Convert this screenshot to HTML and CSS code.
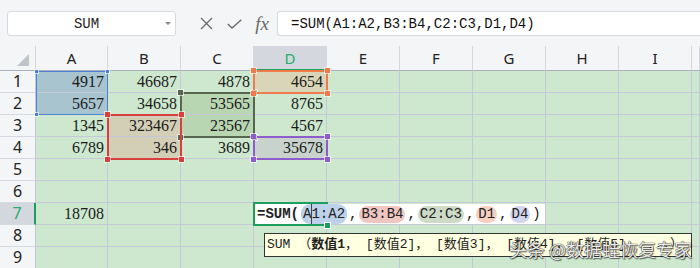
FILE: index.html
```html
<!doctype html>
<html lang="zh-CN">
  <head>
    <meta charset="utf-8">
    <title>SUM</title>
    <link rel="stylesheet" href="styles.css">
  </head>
  <body>
    <div class="bar">
      <div class="namebox"><span class="val">SUM</span><span class="drop"></span></div>
      <div class="tools">
        <span class="tool"><svg width="13" height="13" viewBox="0 0 13 13"><path d="M1 1L12 12M12 1L1 12" stroke="currentColor" stroke-width="1.3" fill="none"/></svg></span>
        <span class="tool"><svg width="15" height="10" viewBox="0 0 15 10"><path d="M0.8 5L5 9L14.3 0.8" stroke="currentColor" stroke-width="1.3" fill="none"/></svg></span>
        <span class="tool fx">fx</span>
      </div>
      <div class="formula">=SUM(A1:A2,B3:B4,C2:C3,D1,D4)</div>
    </div>

    <div class="sheet">
      <div class="cells">
        <div class="corner"></div>
        <div class="ch">A</div><div class="ch">B</div><div class="ch">C</div><div class="ch on">D</div><div class="ch">E</div>
        <div class="ch">F</div><div class="ch">G</div><div class="ch">H</div><div class="ch">I</div><div class="ch"></div>

        <div class="rh">1</div>
        <div class="c f-blue">4917</div><div class="c">46687</div><div class="c">4878</div><div class="c f-orange">4654</div>
        <div class="c"></div><div class="c"></div><div class="c"></div><div class="c"></div><div class="c"></div><div class="c"></div>

        <div class="rh">2</div>
        <div class="c f-blue">5657</div><div class="c">34658</div><div class="c f-olive">53565</div><div class="c">8765</div>
        <div class="c"></div><div class="c"></div><div class="c"></div><div class="c"></div><div class="c"></div><div class="c"></div>

        <div class="rh">3</div>
        <div class="c">1345</div><div class="c f-red">323467</div><div class="c f-olive">23567</div><div class="c">4567</div>
        <div class="c"></div><div class="c"></div><div class="c"></div><div class="c"></div><div class="c"></div><div class="c"></div>

        <div class="rh">4</div>
        <div class="c">6789</div><div class="c f-red">346</div><div class="c">3689</div><div class="c f-purple">35678</div>
        <div class="c"></div><div class="c"></div><div class="c"></div><div class="c"></div><div class="c"></div><div class="c"></div>

        <div class="rh">5</div>
        <div class="c"></div><div class="c"></div><div class="c"></div><div class="c"></div><div class="c"></div>
        <div class="c"></div><div class="c"></div><div class="c"></div><div class="c"></div><div class="c"></div>

        <div class="rh">6</div>
        <div class="c"></div><div class="c"></div><div class="c"></div><div class="c"></div><div class="c"></div>
        <div class="c"></div><div class="c"></div><div class="c"></div><div class="c"></div><div class="c"></div>

        <div class="rh on">7</div>
        <div class="c">18708</div><div class="c"></div><div class="c"></div><div class="c"></div><div class="c"></div>
        <div class="c"></div><div class="c"></div><div class="c"></div><div class="c"></div><div class="c"></div>

        <div class="rh">8</div>
        <div class="c"></div><div class="c"></div><div class="c"></div><div class="c"></div><div class="c"></div>
        <div class="c"></div><div class="c"></div><div class="c"></div><div class="c"></div><div class="c"></div>

        <div class="rh">9</div>
        <div class="c"></div><div class="c"></div><div class="c"></div><div class="c"></div><div class="c"></div>
        <div class="c"></div><div class="c"></div><div class="c"></div><div class="c"></div><div class="c"></div>
      </div>

      <div class="marks">
        <div class="rng thin r-blue at-a12"><i></i><i></i><i></i><i></i></div>
        <div class="rng r-olive at-c23"><i></i><i></i><i></i><i></i></div>
        <div class="rng r-red at-b34"><i></i><i></i><i></i><i></i></div>
        <div class="rng r-orange at-d1"><i></i><i></i><i></i><i></i></div>
        <div class="rng r-purple at-d4"><i></i><i></i><i></i><i></i></div>

        <div class="edit-frame"></div>
        <div class="editor"><b>=SUM(</b><span class="pill p-blue">A<span class="caret"></span>1:A2</span>,<span class="pill p-red">B3:B4</span>,<span class="pill p-olive">C2:C3</span>,<span class="pill p-orange">D1</span>,<span class="pill p-purple">D4</span>)</div>
        <div class="edit-h"></div>

        <div class="tip">SUM （<b>数值1</b>， [数值2]， [数值3]， [数值4]， [数值5]， ...）</div>
        <div class="mark">头条 @数据蛙恢复专家</div>
      </div>
    </div>
  </body>
</html>
```

FILE: styles.css
```css
* {
  box-sizing: border-box;
}
body {
  margin: 0;
  background: #f4f5f7;
  font-family: "Noto Sans", sans-serif;
  color: #222;
  overflow: hidden;
}

/* formula bar */
.bar {
  display: flex;
  align-items: center;
  height: 46px;
  padding: 11px 0 10px 7px;
}
.namebox {
  width: 169px;
  height: 25px;
  display: flex;
  align-items: center;
  background: #fff;
  border: 1px solid #d7dae0;
  border-radius: 3px;
  font: 14px "Liberation Mono", monospace;
  color: #222;
}
.namebox .val {
  flex: 1;
  text-align: center;
}
.namebox .drop {
  border-left: 3px solid transparent;
  border-right: 3px solid transparent;
  border-top: 3px solid #8a8a8a;
  margin-right: 4px;
}
.tools {
  display: flex;
  align-items: center;
  gap: 4px;
  padding: 0 3px 0 18px;
}
.tool {
  width: 24px;
  height: 24px;
  display: flex;
  align-items: center;
  justify-content: center;
  color: #6a6a6a;
}
.fx {
  font: italic 19px "Liberation Serif", serif;
}
.formula {
  flex: 1;
  height: 25px;
  display: flex;
  align-items: center;
  padding-left: 13px;
  background: #fff;
  border: 1px solid #d7dae0;
  border-right: 0;
  border-radius: 3px 0 0 3px;
  font: 14px "Liberation Mono", monospace;
  color: #111;
}

/* sheet */
.sheet {
  display: grid;
}
.cells, .marks {
  grid-area: 1 / 1;
  display: grid;
  grid-template-columns: 36px 72px repeat(8, 73px) 1fr;
  grid-template-rows: 25px repeat(9, 22px);
}
.marks {
  pointer-events: none;
}
.corner {
  display: flex;
  justify-content: flex-end;
  align-items: flex-end;
  padding: 0 6px 4px 0;
  border-right: 1px solid #d2d5dc;
  border-bottom: 1px solid #a9b0bc;
}
.corner::after {
  content: "";
  border-left: 12px solid transparent;
  border-bottom: 12px solid #bfc3ca;
}
.ch {
  text-align: center;
  font-size: 15px;
  line-height: 24px;
  border-right: 1px solid #d4d7de;
  border-bottom: 1px solid #a9b0bc;
}
.ch.on {
  background: #d4d7de;
  color: #25ad6c;
  border-bottom: 2px solid #1e9e5e;
}
.rh {
  text-align: center;
  font-size: 16px;
  line-height: 21px;
  border-right: 1px solid #c3c7d0;
  border-bottom: 1px solid #d6d9e0;
}
.rh.on {
  background: #d4d7de;
  color: #25ad6c;
  border-right: 2px solid #1e9e5e;
}
.c {
  background: #cde8ce;
  border-right: 1px solid #c4c8d8;
  border-bottom: 1px solid #c4c8d8;
  padding-right: 3px;
  text-align: right;
  font: 16px/22px "Liberation Serif", serif;
  color: #1b1b1b;
}
.f-blue { background: #a8c4cf; }
.f-red { background: #d3cfb6; }
.f-olive { background: #b9d6b3; }
.f-orange { background: #d8d5b8; }
.f-purple { background: #c7d3cc; }

/* reference ranges */
.rng {
  position: relative;
  margin: -1px;
  border: 2px solid currentColor;
}
.rng i {
  position: absolute;
  width: 5px;
  height: 5px;
  background: currentColor;
  box-shadow: 0 0 0 1px rgba(255, 255, 255, 0.6);
}
.rng i:nth-child(1) { top: -4px; left: -4px; }
.rng i:nth-child(2) { top: -4px; right: -4px; }
.rng i:nth-child(3) { bottom: -4px; left: -4px; }
.rng i:nth-child(4) { bottom: -4px; right: -4px; }
.rng.thin {
  margin: 0;
  border-width: 1px;
}
.rng.thin i {
  width: 3px;
  height: 3px;
}
.rng.thin i:nth-child(1) { top: -2px; left: -2px; }
.rng.thin i:nth-child(2) { top: -2px; right: -2px; }
.rng.thin i:nth-child(3) { bottom: -2px; left: -2px; }
.rng.thin i:nth-child(4) { bottom: -2px; right: -2px; }
.r-blue { color: #4a80d8; }
.r-red { color: #d9403d; }
.r-olive { color: #56664f; }
.r-orange { color: #f07a4a; }
.r-purple { color: #8e5ccc; }
.at-a12 { grid-column: 2; grid-row: 2 / span 2; }
.at-b34 { grid-column: 3; grid-row: 4 / span 2; }
.at-c23 { grid-column: 4; grid-row: 3 / span 2; }
.at-d1 { grid-column: 5; grid-row: 2; }
.at-d4 { grid-column: 5; grid-row: 5; }

/* in-cell editor */
.edit-frame {
  grid-column: 5;
  grid-row: 8;
  margin: -1px;
  border: 2px solid #1e9e5e;
}
.editor {
  grid-column: 5 / 10;
  grid-row: 8;
  justify-self: start;
  display: flex;
  align-items: center;
  margin: 1px 0 1px 1px;
  padding: 0 4px 0 2px;
  background: #fff;
  font: 14px "Liberation Mono", monospace;
  color: #222;
  white-space: nowrap;
}
.pill {
  margin: 0 2px;
  padding: 0 2px;
  border-radius: 9px;
  line-height: 17px;
}
.p-blue { background: #bcd1ea; }
.p-red { background: #efc6c1; }
.p-olive { background: #cddac6; }
.p-orange { background: #f6cfc0; }
.p-purple { background: #d3d6ee; }
.caret {
  display: inline-block;
  width: 1px;
  height: 20px;
  margin-right: -1px;
  vertical-align: middle;
  background: #444;
}
.edit-h {
  position: relative;
  grid-column: 5;
  grid-row: 8;
  justify-self: end;
  align-self: end;
  width: 5px;
  height: 5px;
  margin: 0 -3px -3px 0;
  background: #1e9e5e;
  box-shadow: 0 0 0 1px #fff;
}

/* argument hint */
.tip {
  grid-column: 5 / -1;
  grid-row: 9 / span 2;
  justify-self: start;
  align-self: start;
  height: 24px;
  margin: 8px 0 0 10px;
  padding: 0 8px 0 2px;
  background: #ffffe1;
  border: 1px solid #333;
  font: 13px/22px "Liberation Mono", "Noto Sans CJK SC", monospace;
  color: #222;
  white-space: nowrap;
}
.mark {
  position: relative;
  grid-column: 7 / -1;
  grid-row: 9 / span 2;
  justify-self: end;
  align-self: start;
  margin: 14px 8px 0 0;
  font: 18px/20px "Noto Sans CJK SC", sans-serif;
  color: rgba(255, 255, 255, 0.92);
  text-shadow: 0 0 1px #222, 0 0 1px #222, 1px 1px 1px rgba(0, 0, 0, 0.5);
  white-space: nowrap;
}
```
